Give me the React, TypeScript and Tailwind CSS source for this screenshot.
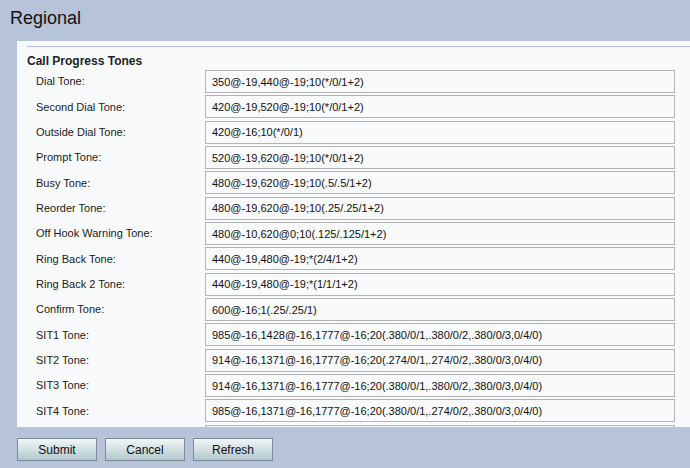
const TONES: [string, string][] = [
  ["Dial Tone:", "350@-19,440@-19;10(*/0/1+2)"],
  ["Second Dial Tone:", "420@-19,520@-19;10(*/0/1+2)"],
  ["Outside Dial Tone:", "420@-16;10(*/0/1)"],
  ["Prompt Tone:", "520@-19,620@-19;10(*/0/1+2)"],
  ["Busy Tone:", "480@-19,620@-19;10(.5/.5/1+2)"],
  ["Reorder Tone:", "480@-19,620@-19;10(.25/.25/1+2)"],
  ["Off Hook Warning Tone:", "480@-10,620@0;10(.125/.125/1+2)"],
  ["Ring Back Tone:", "440@-19,480@-19;*(2/4/1+2)"],
  ["Ring Back 2 Tone:", "440@-19,480@-19;*(1/1/1+2)"],
  ["Confirm Tone:", "600@-16;1(.25/.25/1)"],
  ["SIT1 Tone:", "985@-16,1428@-16,1777@-16;20(.380/0/1,.380/0/2,.380/0/3,0/4/0)"],
  ["SIT2 Tone:", "914@-16,1371@-16,1777@-16;20(.274/0/1,.274/0/2,.380/0/3,0/4/0)"],
  ["SIT3 Tone:", "914@-16,1371@-16,1777@-16;20(.380/0/1,.380/0/2,.380/0/3,0/4/0)"],
  ["SIT4 Tone:", "985@-16,1371@-16,1777@-16;20(.380/0/1,.274/0/2,.380/0/3,0/4/0)"],
];

function ToneRow({ label, value }: { label: string; value: string }) {
  return (
    <div className="flex h-[25.33px] shrink-0 items-center">
      <div className="w-[178px] shrink-0 pl-[9px] text-[11px] text-[#1a1a1a]">{label}</div>
      <input
        type="text"
        defaultValue={value}
        className="h-[23px] flex-1 border border-[#b3b3b3] bg-[#f9fafc] px-[6px] text-[11px] text-[#111] outline-none"
      />
    </div>
  );
}

function PageButton({ label }: { label: string }) {
  return (
    <button
      type="button"
      className="h-[23px] w-[80px] border border-[#7d8993] bg-gradient-to-b from-[#f1f6f7] to-[#b3c9d0] text-[12px] text-[#111]"
    >
      {label}
    </button>
  );
}

export default function App() {
  return (
    <div
      className="flex h-[468px] w-[690px] flex-col overflow-hidden bg-[#b7c3d9]"
      style={{ fontFamily: '"Liberation Sans", Arial, sans-serif' }}
    >
      <h1 className="h-[41px] pl-[10px] pt-[7px] text-[18px] leading-[22px] text-[#111]">Regional</h1>

      <div className="ml-[17px] flex h-[386px] flex-col overflow-hidden bg-[#f9fafc] pl-[10px] pr-[15px] pt-[5px]">
        <div className="-mr-[15px] h-px shrink-0 bg-[#b6bdf0]" />
        <h2 className="mt-[6px] h-[16px] shrink-0 text-[12px] font-bold leading-[16px] text-[#222]">
          Call Progress Tones
        </h2>
        <div className="flex flex-col">
          {TONES.map(([label, value]) => (
            <ToneRow key={label} label={label} value={value} />
          ))}
          {/* next row, scrolled out of view: only its top edge shows */}
          <div className="flex h-[25.33px] shrink-0 pt-px">
            <div className="w-[178px] shrink-0" />
            <div className="h-[23px] flex-1 border border-[#b3b3b3] bg-[#f9fafc]" />
          </div>
        </div>
      </div>

      <div className="flex gap-[8px] pl-[17px] pt-[11px]">
        <PageButton label="Submit" />
        <PageButton label="Cancel" />
        <PageButton label="Refresh" />
      </div>
    </div>
  );
}
